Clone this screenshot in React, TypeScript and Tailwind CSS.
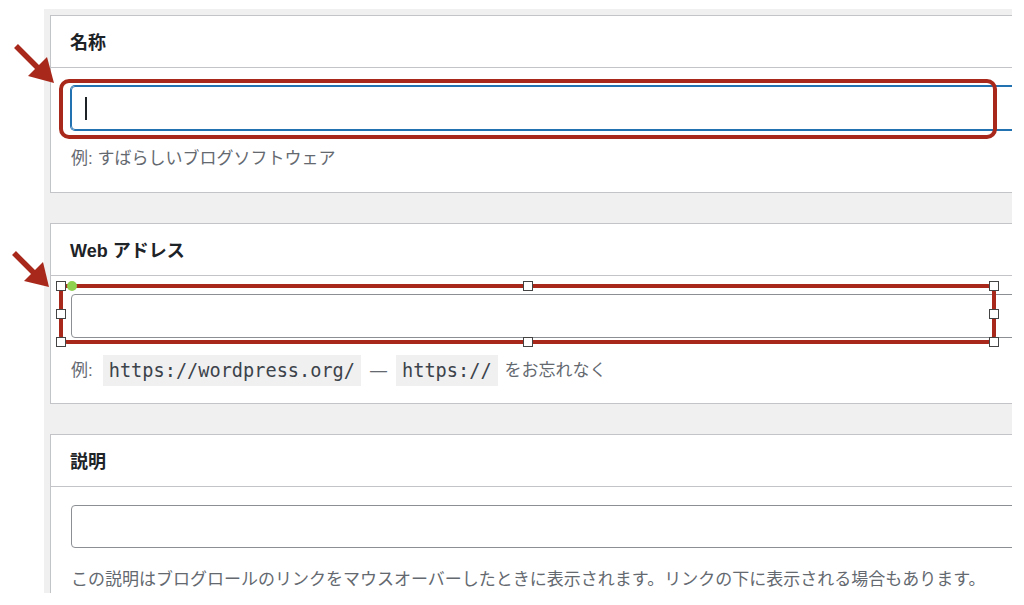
import * as React from "react";

const jp = "font-['Liberation_Sans','Noto_Sans_CJK_JP',sans-serif]";

const Panel: React.FC<{ title: string; children: React.ReactNode; className?: string }> = ({
  title,
  children,
  className,
}) => {
  return (
    <div className={`w-[1000px] bg-white border border-[#c3c4c7] ${className ?? ""}`}>
      <div className="h-[52px] flex items-center pt-[2px] px-[19px] border-b border-[#c3c4c7]">
        <div className={`text-[18px] font-semibold text-[#1d2327] leading-none ${jp}`}>{title}</div>
      </div>
      <div className="px-[20px]">{children}</div>
    </div>
  );
};

const Code: React.FC<{ children: React.ReactNode }> = ({ children }) => (
  <span className="h-[31px] flex items-center bg-[#f0f0f1] px-[6px] text-[18.6px] text-[#3c434a] font-['DejaVu_Sans_Mono',monospace]">
    {children}
  </span>
);

// white selection handle, placed by classes on the frame's edges
const Handle: React.FC<{ className: string }> = ({ className }) => (
  <div className={`absolute w-[10px] h-[10px] bg-white border border-[#444] ${className}`} />
);

export default function App() {
  return (
    <div className="relative w-[1024px] h-[605px] bg-white overflow-hidden">
      <div className="ml-[44px] mt-[9px] w-[968px] h-[584px] bg-[#f0f0f1] overflow-hidden pt-[6px] pl-[6px]">
        <Panel title="名称">
          <div className="pt-[18px]">
            <div className="h-[44px] w-[960px] rounded-[4px] border border-[#2271b1] shadow-[0_0_0_1px_#2271b1] flex items-center pl-[13px]">
              <div className="w-[2px] h-[23px] bg-[#1d2327]" />
            </div>
          </div>
          <div className={`pt-[17px] pb-[21px] text-[17px] leading-[24px] text-[#646970] ${jp}`}>
            例: すばらしいブログソフトウェア
          </div>
        </Panel>

        <Panel title="Web アドレス" className="mt-[30px]">
          <div className="pt-[18px]">
            <div className="h-[44px] w-[960px] rounded-[4px] border border-[#8c8f94]" />
          </div>
          <div className={`pt-[17px] pb-[17px] text-[17px] leading-[25px] text-[#646970] flex items-center ${jp}`}>
            <span className="mr-[10px]">例:</span>
            <Code>https://wordpress.org/</Code>
            <span className="mx-[9px]">—</span>
            <Code>https://</Code>
            <span className="ml-[7px]">をお忘れなく</span>
          </div>
        </Panel>

        <Panel title="説明" className="mt-[30px]">
          <div className="pt-[18px]">
            <div className="h-[43px] w-[960px] rounded-[4px] border border-[#8c8f94]" />
          </div>
          <div className={`pt-[20px] pb-[20px] text-[17px] leading-[24px] text-[#646970] whitespace-nowrap ${jp}`}>
            この説明はブログロールのリンクをマウスオーバーしたときに表示されます。リンクの下に表示される場合もあります。
          </div>
        </Panel>
      </div>

      {/* annotations drawn over the form */}
      <div className="absolute left-[59px] top-[79px] w-[938px] h-[60px] border-[4px] border-[#a8291c] rounded-[10px]" />
      <div className="absolute left-[59px] top-[284px] w-[937px] h-[60px] border-[4px] border-[#a8291c] rounded-[8px]">
        <Handle className="-left-[7px] -top-[7px]" />
        <Handle className="-left-[7px] top-1/2 -translate-y-1/2" />
        <Handle className="-left-[7px] -bottom-[7px]" />
        <Handle className="left-1/2 -translate-x-1/2 -top-[7px]" />
        <Handle className="left-1/2 -translate-x-1/2 -bottom-[7px]" />
        <Handle className="-right-[7px] -top-[7px]" />
        <Handle className="-right-[7px] top-1/2 -translate-y-1/2" />
        <Handle className="-right-[7px] -bottom-[7px]" />
        <div className="absolute left-[4px] -top-[7px] w-[10px] h-[10px] rounded-full bg-[#8fd14f]" />
      </div>
      <svg className="absolute left-0 top-0" width="1024" height="605">
        <line x1="16" y1="46" x2="40" y2="70" stroke="#a8291c" strokeWidth="5.5" />
        <polygon points="54,83 47,57 28,76" fill="#a8291c" />
        <line x1="14" y1="253" x2="36" y2="275" stroke="#a8291c" strokeWidth="5.5" />
        <polygon points="49,287 43,262 24,281" fill="#a8291c" />
      </svg>
    </div>
  );
}
